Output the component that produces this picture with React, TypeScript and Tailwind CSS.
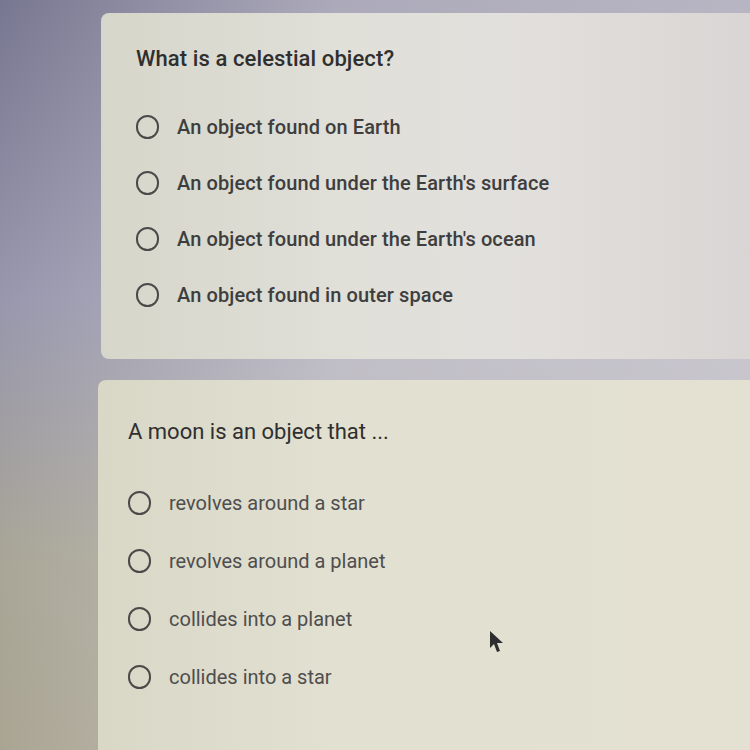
import React from "react";

function Radio() {
  return <span className="block w-[23px] h-[24px] shrink-0 rounded-full border-[2.5px] border-[#4a4a4a]" />;
}

function Option({ text, color }: { text: string; color: string }) {
  return (
    <div className="flex items-center gap-[18px] h-[28px]">
      <Radio />
      <span className={`text-[20px] leading-[28px] ${color}`}>{text}</span>
    </div>
  );
}

export default function App() {
  const q1 = [
    "An object found on Earth",
    "An object found under the Earth's surface",
    "An object found under the Earth's ocean",
    "An object found in outer space",
  ];
  const q2 = ["revolves around a star", "revolves around a planet", "collides into a planet", "collides into a star"];
  return (
    <div
      className="relative w-[750px] h-[750px] overflow-hidden bg-[linear-gradient(90deg,rgba(255,255,255,0)_0%,rgba(235,232,235,0.45)_45%,rgba(235,232,235,0.55)_100%),linear-gradient(180deg,#787791_0%,#9897ad_40%,#a9a697_75%,#aaa593_100%)] pt-[13px]"
      style={{ fontFamily: "Roboto, 'Liberation Sans', sans-serif" }}
    >
      <div className="ml-[101px] w-[680px] h-[346px] rounded-[8px] bg-[linear-gradient(90deg,#d6d6ca_0%,#e0dfd8_35%,#e2e0dc_60%,#d8d4d3_100%)] pl-[35px] pt-[31px]">
        <div className="text-[22px] leading-[30px] text-[#2f2f2f] font-medium tracking-[0.1px]">What is a celestial object?</div>
        <div className="mt-[39px] flex flex-col gap-[28px]">
          {q1.map((t) => (
            <Option key={t} text={t} color="text-[#3e3e3e] font-medium tracking-[0.1px]" />
          ))}
        </div>
      </div>
      <div className="ml-[98px] mt-[21px] w-[680px] h-[400px] rounded-[8px] bg-[linear-gradient(90deg,#d9d7c6_0%,#e2e0d1_35%,#e4e1d2_100%)] pl-[30px] pt-[37px]">
        <div className="text-[22px] leading-[30px] text-[#2f2f2f]">A moon is an object that ...</div>
        <div className="mt-[42px] flex flex-col gap-[30px]">
          {q2.map((t) => (
            <Option key={t} text={t} color="text-[#4e4e4e]" />
          ))}
        </div>
      </div>
      <svg className="absolute left-[489px] top-[630px]" width="16" height="24" viewBox="0 0 16 24">
        <path d="M1 1 L1 18 L5 14 L8 22 L11 21 L8 13 L14 13 Z" fill="#2e2e2e" />
      </svg>
    </div>
  );
}
